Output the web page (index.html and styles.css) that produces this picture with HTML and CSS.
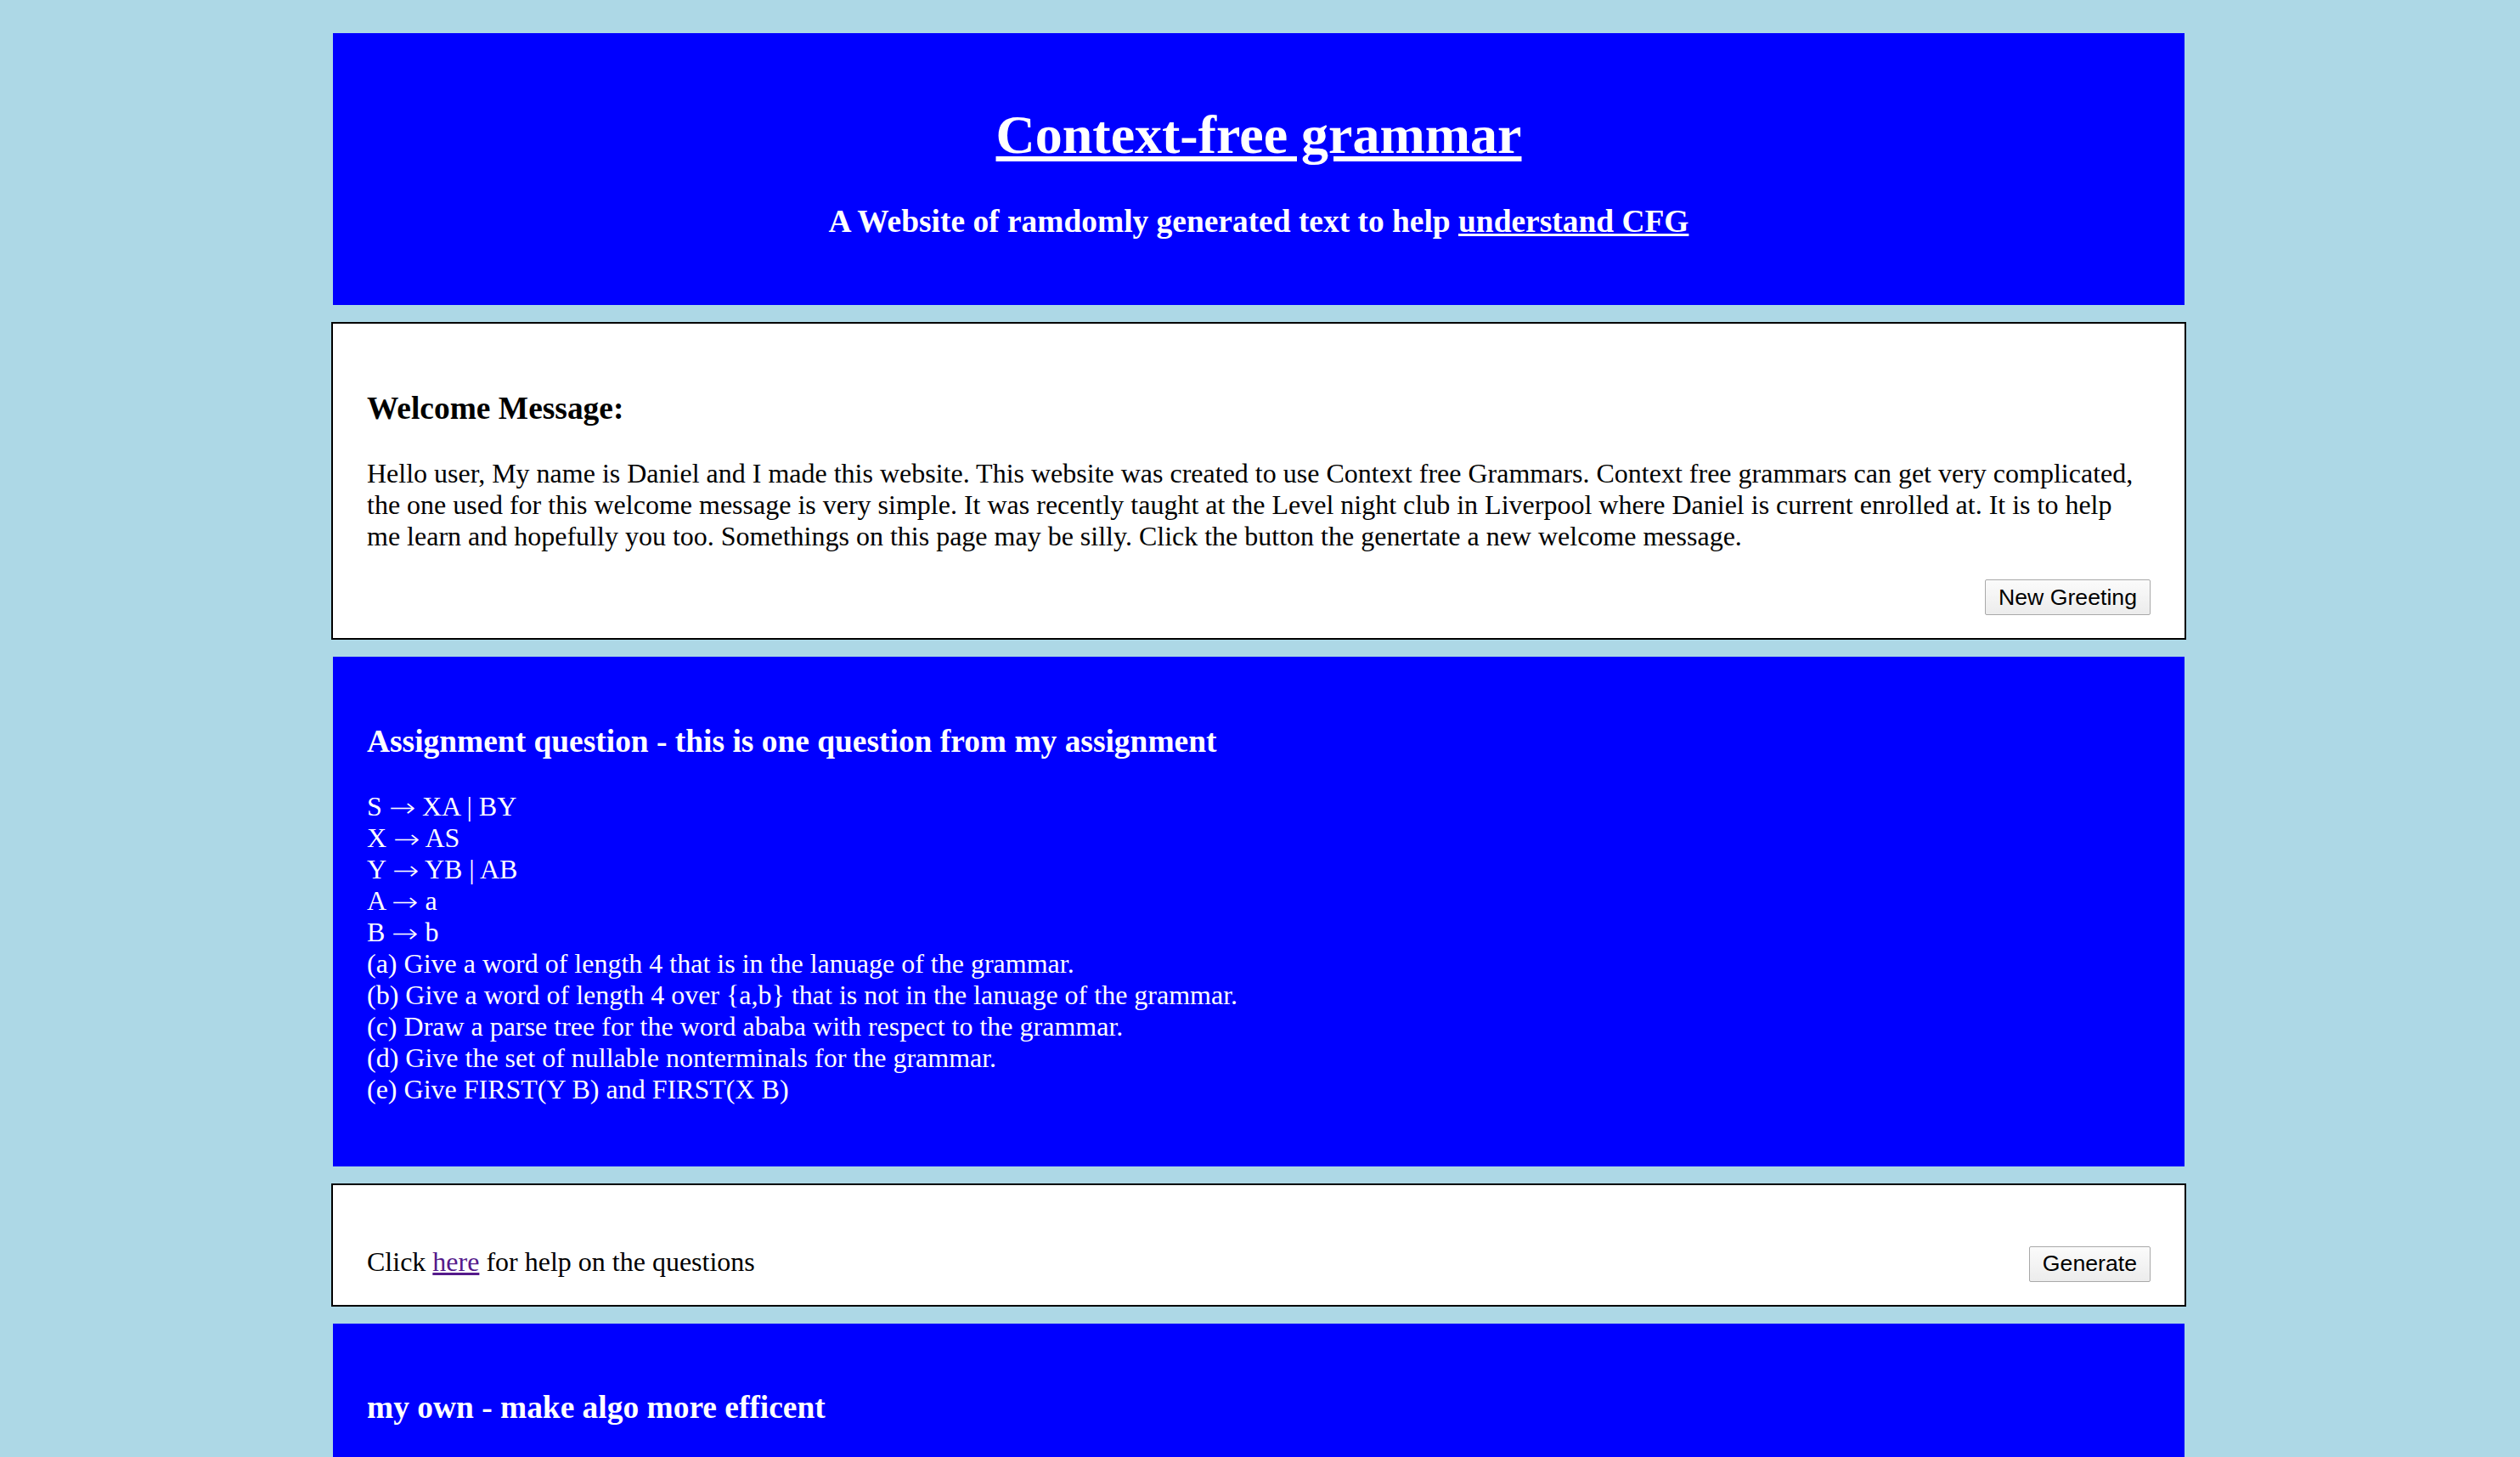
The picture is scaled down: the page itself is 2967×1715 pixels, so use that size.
FILE: index.html
```html
<!DOCTYPE html>
<html lang="en">
<head>
<meta charset="utf-8">
<title>Context-free grammar</title>
<link rel="stylesheet" href="styles.css">
</head>
<body>
<div class="page">
  <header class="banner header">
    <h1><a href="#" class="white-link">Context-free grammar</a></h1>
    <h3>A Website of ramdomly generated text to help <a href="#" class="white-link">understand CFG</a></h3>
  </header>

  <section class="card welcome">
    <h3>Welcome Message:</h3>
    <p>Hello user, My name is Daniel and I made this website. This website was created to use Context free Grammars. Context free grammars can get very complicated, the one used for this welcome message is very simple. It was recently taught at the Level night club in Liverpool where Daniel is current enrolled at. It is to help me learn and hopefully you too. Somethings on this page may be silly. Click the button the genertate a new welcome message.</p>
    <div class="actions">
      <button type="button" class="btn">New Greeting</button>
    </div>
  </section>

  <section class="banner">
    <h3>Assignment question - this is one question from my assignment</h3>
    <p>S <span class="arrow">→</span> XA | BY<br>
    X <span class="arrow">→</span> AS<br>
    Y <span class="arrow">→</span> YB | AB<br>
    A <span class="arrow">→</span> a<br>
    B <span class="arrow">→</span> b<br>
    (a) Give a word of length 4 that is in the lanuage of the grammar.<br>
    (b) Give a word of length 4 over {a,b} that is not in the lanuage of the grammar.<br>
    (c) Draw a parse tree for the word ababa with respect to the grammar.<br>
    (d) Give the set of nullable nonterminals for the grammar.<br>
    (e) Give FIRST(Y B) and FIRST(X B)</p>
  </section>

  <section class="card help">
    <div class="help-row">
      <p>Click <a href="#" class="visited-link">here</a> for help on the questions</p>
      <button type="button" class="btn">Generate</button>
    </div>
  </section>

  <section class="banner">
    <h3>my own - make algo more efficent</h3>
    <p>&nbsp;</p>
  </section>
</div>
</body>
</html>
```

FILE: styles.css
```css
html, body {
  margin: 0;
  padding: 0;
}

body {
  background: #add8e6;
  font-family: "Liberation Serif", "Times New Roman", serif;
  font-size: 32px;
  color: #000;
}

.page {
  display: flex;
  flex-direction: column;
  align-items: center;
  gap: 20px;
  padding: 39px 3px 40px 0;
}

.banner {
  width: 2100px;
  padding: 40px;
  background: #0000ff;
  color: #fff;
}

.card {
  width: 2100px;
  background: #fff;
  border: 2px solid #000;
}

h1 {
  font-size: 64px;
  font-weight: bold;
  margin: 42.88px 0;
}

h3 {
  font-size: 37.44px;
  font-weight: bold;
  margin: 37.44px 0;
}

p {
  margin: 32px 0;
}

.header {
  text-align: center;
}

.white-link {
  color: #fff;
  text-decoration: underline;
}

.visited-link {
  color: #551a8b;
  text-decoration: underline;
}

.arrow {
  display: inline-block;
  font-family: "DejaVu Sans", sans-serif;
  font-weight: 200;
  font-size: 30px;
  line-height: 26px;
  margin: 0 3px;
  transform: scaleX(1.25);
  vertical-align: -1px;
}

.welcome {
  padding: 40px 40px 27px;
}

.actions {
  display: flex;
  justify-content: flex-end;
}

.help {
  padding: 40px 40px 0;
}

.help-row {
  display: flex;
  justify-content: space-between;
  align-items: flex-start;
}

.help-row .btn {
  margin-top: 32px;
}

.btn {
  font-family: "Liberation Sans", Arial, sans-serif;
  font-size: 26.67px;
  color: #000;
  height: 42px;
  padding: 0 15px;
  border: 1px solid #a9a9a9;
  border-radius: 2px;
  background: linear-gradient(#fbfbfb, #ececec);
  cursor: pointer;
}
```
